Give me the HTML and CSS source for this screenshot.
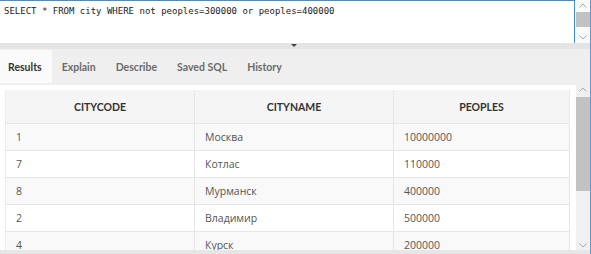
FILE: index.html
```html
<!DOCTYPE html>
<html>
<head>
<meta charset="utf-8">
<link rel="stylesheet" href="styles.css">
</head>
<body>
<div class="app">
  <div class="editor">
    <div class="code">SELECT * FROM city WHERE not peoples=300000 or peoples=400000</div>
    <div class="vscroll small">
      <svg class="arrow" width="14" height="10" viewBox="0 0 14 10"><path d="M3.5 6.5 L7 3 L10.5 6.5" fill="none" stroke="#a8a8a8" stroke-width="1"/></svg>
      <div class="thumb t1"></div>
      <div class="track"></div>
      <svg class="arrow" width="14" height="10" viewBox="0 0 14 10"><path d="M3.5 3.5 L7 7 L10.5 3.5" fill="none" stroke="#a8a8a8" stroke-width="1"/></svg>
    </div>
  </div>
  <div class="splitter"><span class="tri"></span></div>
  <div class="tabs">
    <div class="tab active">Results</div>
    <div class="tab">Explain</div>
    <div class="tab">Describe</div>
    <div class="tab">Saved SQL</div>
    <div class="tab">History</div>
  </div>
  <div class="results">
    <div class="table-wrap">
      <table class="grid">
        <colgroup><col class="c1"><col class="c2"><col class="c3"></colgroup>
        <thead>
          <tr><th>CITYCODE</th><th>CITYNAME</th><th>PEOPLES</th></tr>
        </thead>
        <tbody>
          <tr><td>1</td><td>Москва</td><td>10000000</td></tr>
          <tr><td>7</td><td>Котлас</td><td>110000</td></tr>
          <tr><td>8</td><td>Мурманск</td><td>400000</td></tr>
          <tr><td>2</td><td>Владимир</td><td>500000</td></tr>
          <tr><td>4</td><td>Курск</td><td>200000</td></tr>
        </tbody>
      </table>
    </div>
    <div class="vscroll big">
      <svg class="arrow" width="14" height="10" viewBox="0 0 14 10"><path d="M3.5 6.5 L7 3 L10.5 6.5" fill="none" stroke="#a8a8a8" stroke-width="1"/></svg>
      <div class="thumb t2"></div>
      <div class="track"></div>
      <svg class="arrow" width="14" height="10" viewBox="0 0 14 10"><path d="M3.5 3.5 L7 7 L10.5 3.5" fill="none" stroke="#a8a8a8" stroke-width="1"/></svg>
    </div>
  </div>
  <div class="hbar"></div>
</div>
</body>
</html>
```
FILE: styles.css
```css
html, body {
  margin: 0;
  padding: 0;
  background: #ffffff;
}
body {
  width: 591px;
  height: 254px;
  overflow: hidden;
  font-family: "Open Sans", "Noto Sans", sans-serif;
}
.app {
  width: 590px;
  height: 254px;
  border-right: 1px solid #5b9bd5;
  display: flex;
  flex-direction: column;
}
.editor {
  height: 43px;
  display: flex;
  flex-shrink: 0;
}
.code {
  flex: 1;
  border-top: 1px solid #3d8fd8;
  border-right: 1px solid #3d8fd8;
  font-family: "DejaVu Sans Mono", "Liberation Mono", monospace;
  font-size: 9px;
  line-height: 12px;
  color: #222;
  padding: 4px 0 0 4px;
  white-space: pre;
}
.vscroll {
  width: 14px;
  display: flex;
  flex-direction: column;
  background: #f0f0f0;
}
.vscroll.small {
  background: #fafafa;
  margin-left: 1px;
}
.arrow {
  display: block;
  flex-shrink: 0;
}
.vscroll.small .arrow { height: 12px; }
.thumb {
  background: #c2c2c2;
  flex-shrink: 0;
}
.t1 { height: 15px; }
.t2 { height: 94px; margin-top: 2px; }
.track { flex: 1; }
.splitter {
  height: 6px;
  background: #e4e4e4;
  position: relative;
  flex-shrink: 0;
}
.tri {
  position: absolute;
  left: 291px;
  top: 1px;
  width: 0;
  height: 0;
  border-left: 3px solid transparent;
  border-right: 3px solid transparent;
  border-top: 3px solid #444;
}
.tabs {
  height: 36px;
  background: #efefef;
  display: flex;
  align-items: stretch;
  flex-shrink: 0;
}
.tab {
  font-family: Lato, "Open Sans", sans-serif;
  font-size: 10.5px;
  font-weight: 700;
  color: #6b6b6b;
  padding: 0 10px;
  display: flex;
  align-items: center;
  margin-top: 1px;
  margin-bottom: 2px;
}
.tab:first-child { padding-left: 8px; }
.tab.active {
  background: #fafafa;
  color: #333;
}
.results {
  height: 165px;
  display: flex;
  flex-shrink: 0;
  background: #fff;
}
.table-wrap {
  flex: 1;
  padding: 5px 6px 0 5px;
  overflow: hidden;
}
.grid {
  border-collapse: collapse;
  width: 564px;
  table-layout: fixed;
  font-size: 10.5px;
  color: #555;
}
.c1 { width: 189px; }
.c2 { width: 199px; }
.c3 { width: 176px; }
.grid th {
  height: 33px;
  background: #f5f5f5;
  color: #333;
  font-family: Lato, "Open Sans", sans-serif;
  font-weight: 700;
  font-size: 10.5px;
  text-align: center;
  border: 1px solid #e6e6e6;
  border-top: 0;
  padding: 0;
}
.grid th:first-child, .grid td:first-child { border-left: 1px solid #ececec; }
.grid td {
  height: 26px;
  padding: 0 0 0 10px;
  border: 1px solid #e6e6e6;
  white-space: nowrap;
}
.grid tbody tr:nth-child(odd) td { background: #f9f9f9; }
.hbar {
  height: 4px;
  background: #e6e6e6;
  flex-shrink: 0;
}
```
